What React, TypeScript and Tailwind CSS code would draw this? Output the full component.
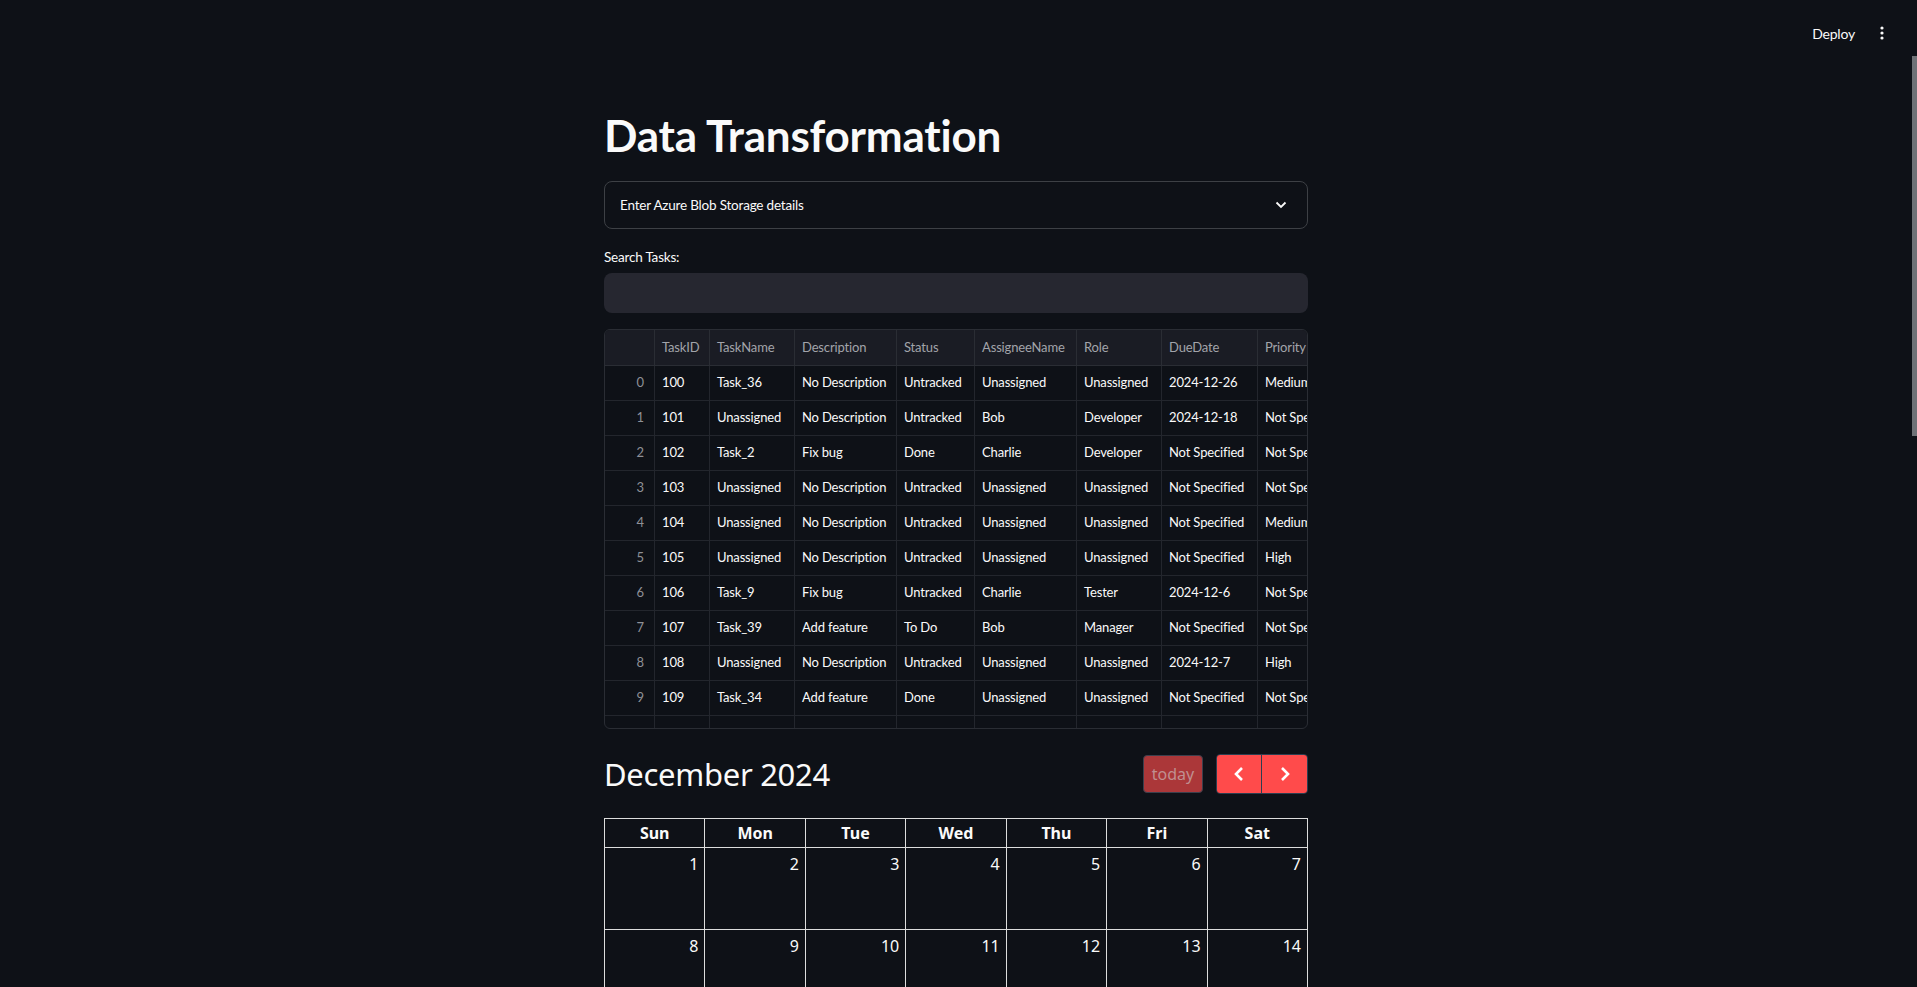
import React from "react";

const ST = { fontFamily: '"Lato", "Noto Sans", sans-serif' };
const FC = { fontFamily: '"Noto Sans", "Open Sans", sans-serif' };

const cols = ["", "TaskID", "TaskName", "Description", "Status", "AssigneeName", "Role", "DueDate", "Priority"];
const widths = ["w-[50px]", "w-[55px]", "w-[85px]", "w-[102px]", "w-[78px]", "w-[102px]", "w-[85px]", "w-[96px]", "w-[110px]"];

const rows: string[][] = [
  ["0", "100", "Task_36", "No Description", "Untracked", "Unassigned", "Unassigned", "2024-12-26", "Medium"],
  ["1", "101", "Unassigned", "No Description", "Untracked", "Bob", "Developer", "2024-12-18", "Not Specified"],
  ["2", "102", "Task_2", "Fix bug", "Done", "Charlie", "Developer", "Not Specified", "Not Specified"],
  ["3", "103", "Unassigned", "No Description", "Untracked", "Unassigned", "Unassigned", "Not Specified", "Not Specified"],
  ["4", "104", "Unassigned", "No Description", "Untracked", "Unassigned", "Unassigned", "Not Specified", "Medium"],
  ["5", "105", "Unassigned", "No Description", "Untracked", "Unassigned", "Unassigned", "Not Specified", "High"],
  ["6", "106", "Task_9", "Fix bug", "Untracked", "Charlie", "Tester", "2024-12-6", "Not Specified"],
  ["7", "107", "Task_39", "Add feature", "To Do", "Bob", "Manager", "Not Specified", "Not Specified"],
  ["8", "108", "Unassigned", "No Description", "Untracked", "Unassigned", "Unassigned", "2024-12-7", "High"],
  ["9", "109", "Task_34", "Add feature", "Done", "Unassigned", "Unassigned", "Not Specified", "Not Specified"],
  ["", "", "", "", "", "", "", "", ""],
];

const days = ["Sun", "Mon", "Tue", "Wed", "Thu", "Fri", "Sat"];
const weeks = [
  [1, 2, 3, 4, 5, 6, 7],
  [8, 9, 10, 11, 12, 13, 14],
];

function DataTable() {
  return (
    <div className="h-[400px] w-full overflow-hidden rounded-md border border-[#2a2d34] text-[13px] tracking-[-0.15px]" style={ST}>
      <div className="flex h-[36px] bg-[#1a1c24] text-[#a2a4aa]">
        {cols.map((c, i) => (
          <div
            key={i}
            className={`${widths[i]} flex shrink-0 items-center overflow-hidden whitespace-nowrap border-b border-r border-[#2a2d34] pl-[7px]`}
          >
            {c}
          </div>
        ))}
      </div>
      {rows.map((r, ri) => (
        <div key={ri} className="flex h-[35px]">
          {r.map((v, ci) => (
            <div
              key={ci}
              className={`${widths[ci]} flex shrink-0 items-center overflow-hidden whitespace-nowrap border-b border-r border-[#23262d] ${
                ci === 0 ? "justify-end pr-[10px] text-[#8e9096]" : "pl-[7px] text-[#fafafa]"
              }`}
            >
              {v}
            </div>
          ))}
        </div>
      ))}
    </div>
  );
}

function Calendar() {
  return (
    <div style={FC}>
      <div className="flex h-[40px] items-center justify-between">
        <h2 className="text-[31px] font-normal leading-[40px] tracking-[-0.3px] text-[#fafafa]">December 2024</h2>
        <div className="flex items-center">
          <button className="mr-[13px] flex h-[38px] w-[60px] items-center justify-center rounded-[4px] border border-[#3b3f4c] bg-[#ab3739] text-[16px] text-[#c08f90]">
            today
          </button>
          <div className="flex h-[40px] overflow-hidden rounded-[4px] border border-[#2c3e50]">
            <button className="flex w-[45px] items-center justify-center border-r border-[#2c3e50] bg-[#ff4b4b]">
              <svg width="10" height="16" viewBox="0 0 10 16">
                <polyline points="8,2 2,8 8,14" fill="none" stroke="#fff" strokeWidth="2.6" />
              </svg>
            </button>
            <button className="flex w-[45px] items-center justify-center bg-[#ff4b4b]">
              <svg width="10" height="16" viewBox="0 0 10 16">
                <polyline points="2,2 8,8 2,14" fill="none" stroke="#fff" strokeWidth="2.6" />
              </svg>
            </button>
          </div>
        </div>
      </div>
      <div className="mt-[24px] border-l border-t border-[#dddddd]">
        <div className="grid grid-cols-7">
          {days.map((d) => (
            <div
              key={d}
              className="flex h-[29px] items-center justify-center border-b border-r border-[#dddddd] text-[16px] font-bold text-[#fafafa]"
            >
              {d}
            </div>
          ))}
        </div>
        {weeks.map((w, wi) => (
          <div key={wi} className="grid grid-cols-7">
            {w.map((d) => (
              <div
                key={d}
                className="h-[82px] border-b border-r border-[#dddddd] px-[6px] pt-[4px] text-right text-[16px] leading-[24px] text-[#fafafa]"
              >
                {d}
              </div>
            ))}
          </div>
        ))}
      </div>
    </div>
  );
}

export default function App() {
  return (
    <div className="relative h-[987px] w-full overflow-hidden bg-[#0e1117] text-[#fafafa]">
      <header className="flex h-[60px] items-center justify-end pr-[33px] pt-[6px]" style={ST}>
        <span className="mr-[25px] text-[14px] tracking-[-0.2px] text-[#fafafa]">Deploy</span>
        <svg width="4" height="14" viewBox="0 0 4 14">
          <circle cx="2" cy="2" r="1.6" fill="#fafafa" />
          <circle cx="2" cy="7" r="1.6" fill="#fafafa" />
          <circle cx="2" cy="12" r="1.6" fill="#fafafa" />
        </svg>
      </header>
      <div className="w-[1912px]">
        <main className="mx-auto flex w-[704px] flex-col" style={ST}>
          <h1 className="mt-[49px] text-[44px] font-bold leading-[53px] tracking-[-0.2px]">Data Transformation</h1>
          <div className="mt-[19px] flex h-[48px] items-center justify-between rounded-lg border border-[#3d4045] pl-[15px] pr-[20px]">
            <span className="text-[13.5px] tracking-[-0.2px]">Enter Azure Blob Storage details</span>
            <svg width="12" height="8" viewBox="0 0 12 8">
              <polyline points="1.5,1.5 6,6 10.5,1.5" fill="none" stroke="#fafafa" strokeWidth="1.8" />
            </svg>
          </div>
          <label className="mt-[17px] text-[13.5px] leading-[22px] tracking-[-0.2px]">Search Tasks:</label>
          <div className="mt-[5px] h-[40px] rounded-lg bg-[#262730]" />
          <div className="mt-[16px]">
            <DataTable />
          </div>
          <div className="mt-[25px]">
            <Calendar />
          </div>
        </main>
      </div>
      <div className="absolute right-0 top-[56px] h-[380px] w-[5px] bg-[#6f7277]" />
    </div>
  );
}
